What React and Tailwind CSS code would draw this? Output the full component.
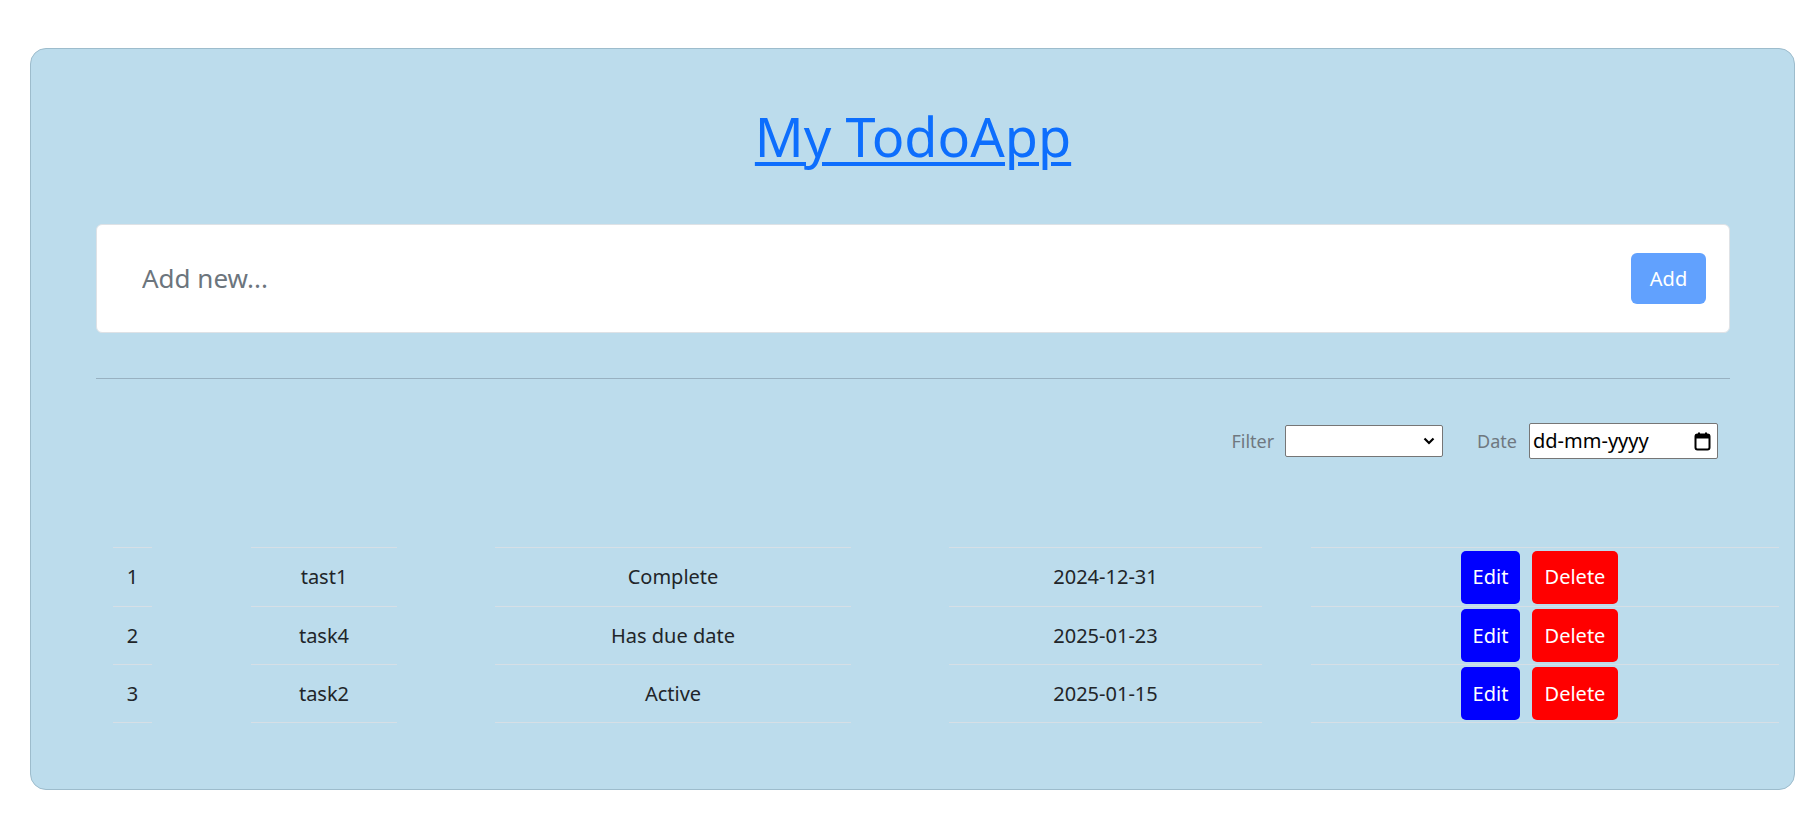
import React from 'react';

const todos = [
  { id: 1, name: 'tast1', status: 'Complete', date: '2024-12-31' },
  { id: 2, name: 'task4', status: 'Has due date', date: '2025-01-23' },
  { id: 3, name: 'task2', status: 'Active', date: '2025-01-15' },
];

const Cell = ({ first, className, children }) => (
  <div
    className={`flex shrink-0 items-center justify-center border-b border-[#d6dfe6] ${first ? 'border-t h-[60px]' : 'h-[58px]'} ${className}`}
  >
    {children}
  </div>
);

export default function App() {
  return (
    <div className="min-h-screen bg-white pt-[48px] font-['Noto_Sans',sans-serif] text-[#212529]">
      <div className="ml-[30px] w-[1765px] rounded-[16px] border border-[#9dbccc] bg-[#bcdcec] pl-[65px] pr-[64px] pt-[55px] pb-[66px]">
        <h1 className="text-center text-[54px] leading-[64px]">
          <a href="#" className="text-[#0d6efd] underline decoration-[4px] underline-offset-[5px]">
            My TodoApp
          </a>
        </h1>

        {/* new todo */}
        <div className="mt-[56px] flex h-[109px] items-center rounded-[6px] border border-[#dee2e6] bg-white pl-[45px] pr-[23px]">
          <input
            className="flex-1 bg-transparent text-[26px] text-[#212529] outline-none placeholder:text-[#6c757d]"
            placeholder="Add new..."
          />
          <button className="h-[51px] w-[75px] rounded-[6px] bg-[#61a1fe] text-[20px] text-white">Add</button>
        </div>

        <div className="mt-[45px] h-px bg-[#98b1c1]" />

        {/* filters */}
        <div className="mt-[44px] flex h-[36px] items-center justify-end pr-[12px] text-[18px]">
          <span className="text-[#6f7880]">Filter</span>
          <div className="ml-[11px] flex h-[32px] w-[158px] items-center justify-end rounded-[2px] border border-[#767676] bg-white pr-[7px]">
            <svg width="12" height="8" viewBox="0 0 12 8">
              <path d="M1.5 1.5 L6 6 L10.5 1.5" fill="none" stroke="#000" strokeWidth="2.2" />
            </svg>
          </div>
          <span className="ml-[34px] text-[#6f7880]">Date</span>
          <div className="ml-[12px] flex h-[36px] w-[189px] items-center justify-between rounded-[2px] border border-[#767676] bg-white pl-[3px] pr-[6px] text-[20px] text-black">
            <span>dd-mm-yyyy</span>
            <svg width="17" height="19" viewBox="0 0 17 19">
              <rect x="1.5" y="2.5" width="14" height="15" rx="2" fill="none" stroke="#000" strokeWidth="2" />
              <rect x="1.5" y="2.5" width="14" height="4" fill="#000" />
              <rect x="4" y="0.5" width="2" height="3" fill="#000" />
              <rect x="11" y="0.5" width="2" height="3" fill="#000" />
            </svg>
          </div>
        </div>

        {/* todo table */}
        <div className="mt-[88px] pl-[17px] text-[20px]">
          {todos.map((t, i) => (
            <div key={t.id} className="flex">
              <Cell first={i === 0} className="w-[39px]">{t.id}</Cell>
              <Cell first={i === 0} className="ml-[99px] w-[146px]">{t.name}</Cell>
              <Cell first={i === 0} className="ml-[98px] w-[356px]">{t.status}</Cell>
              <Cell first={i === 0} className="ml-[98px] w-[313px]">{t.date}</Cell>
              <Cell first={i === 0} className="ml-[49px] w-[468px] gap-[12px] pr-[11px]">
                <button className="h-[53px] w-[59px] rounded-[5px] bg-[#0000ff] text-white">Edit</button>
                <button className="h-[53px] w-[86px] rounded-[5px] bg-[#ff0000] text-white">Delete</button>
              </Cell>
            </div>
          ))}
        </div>
      </div>
    </div>
  );
}
